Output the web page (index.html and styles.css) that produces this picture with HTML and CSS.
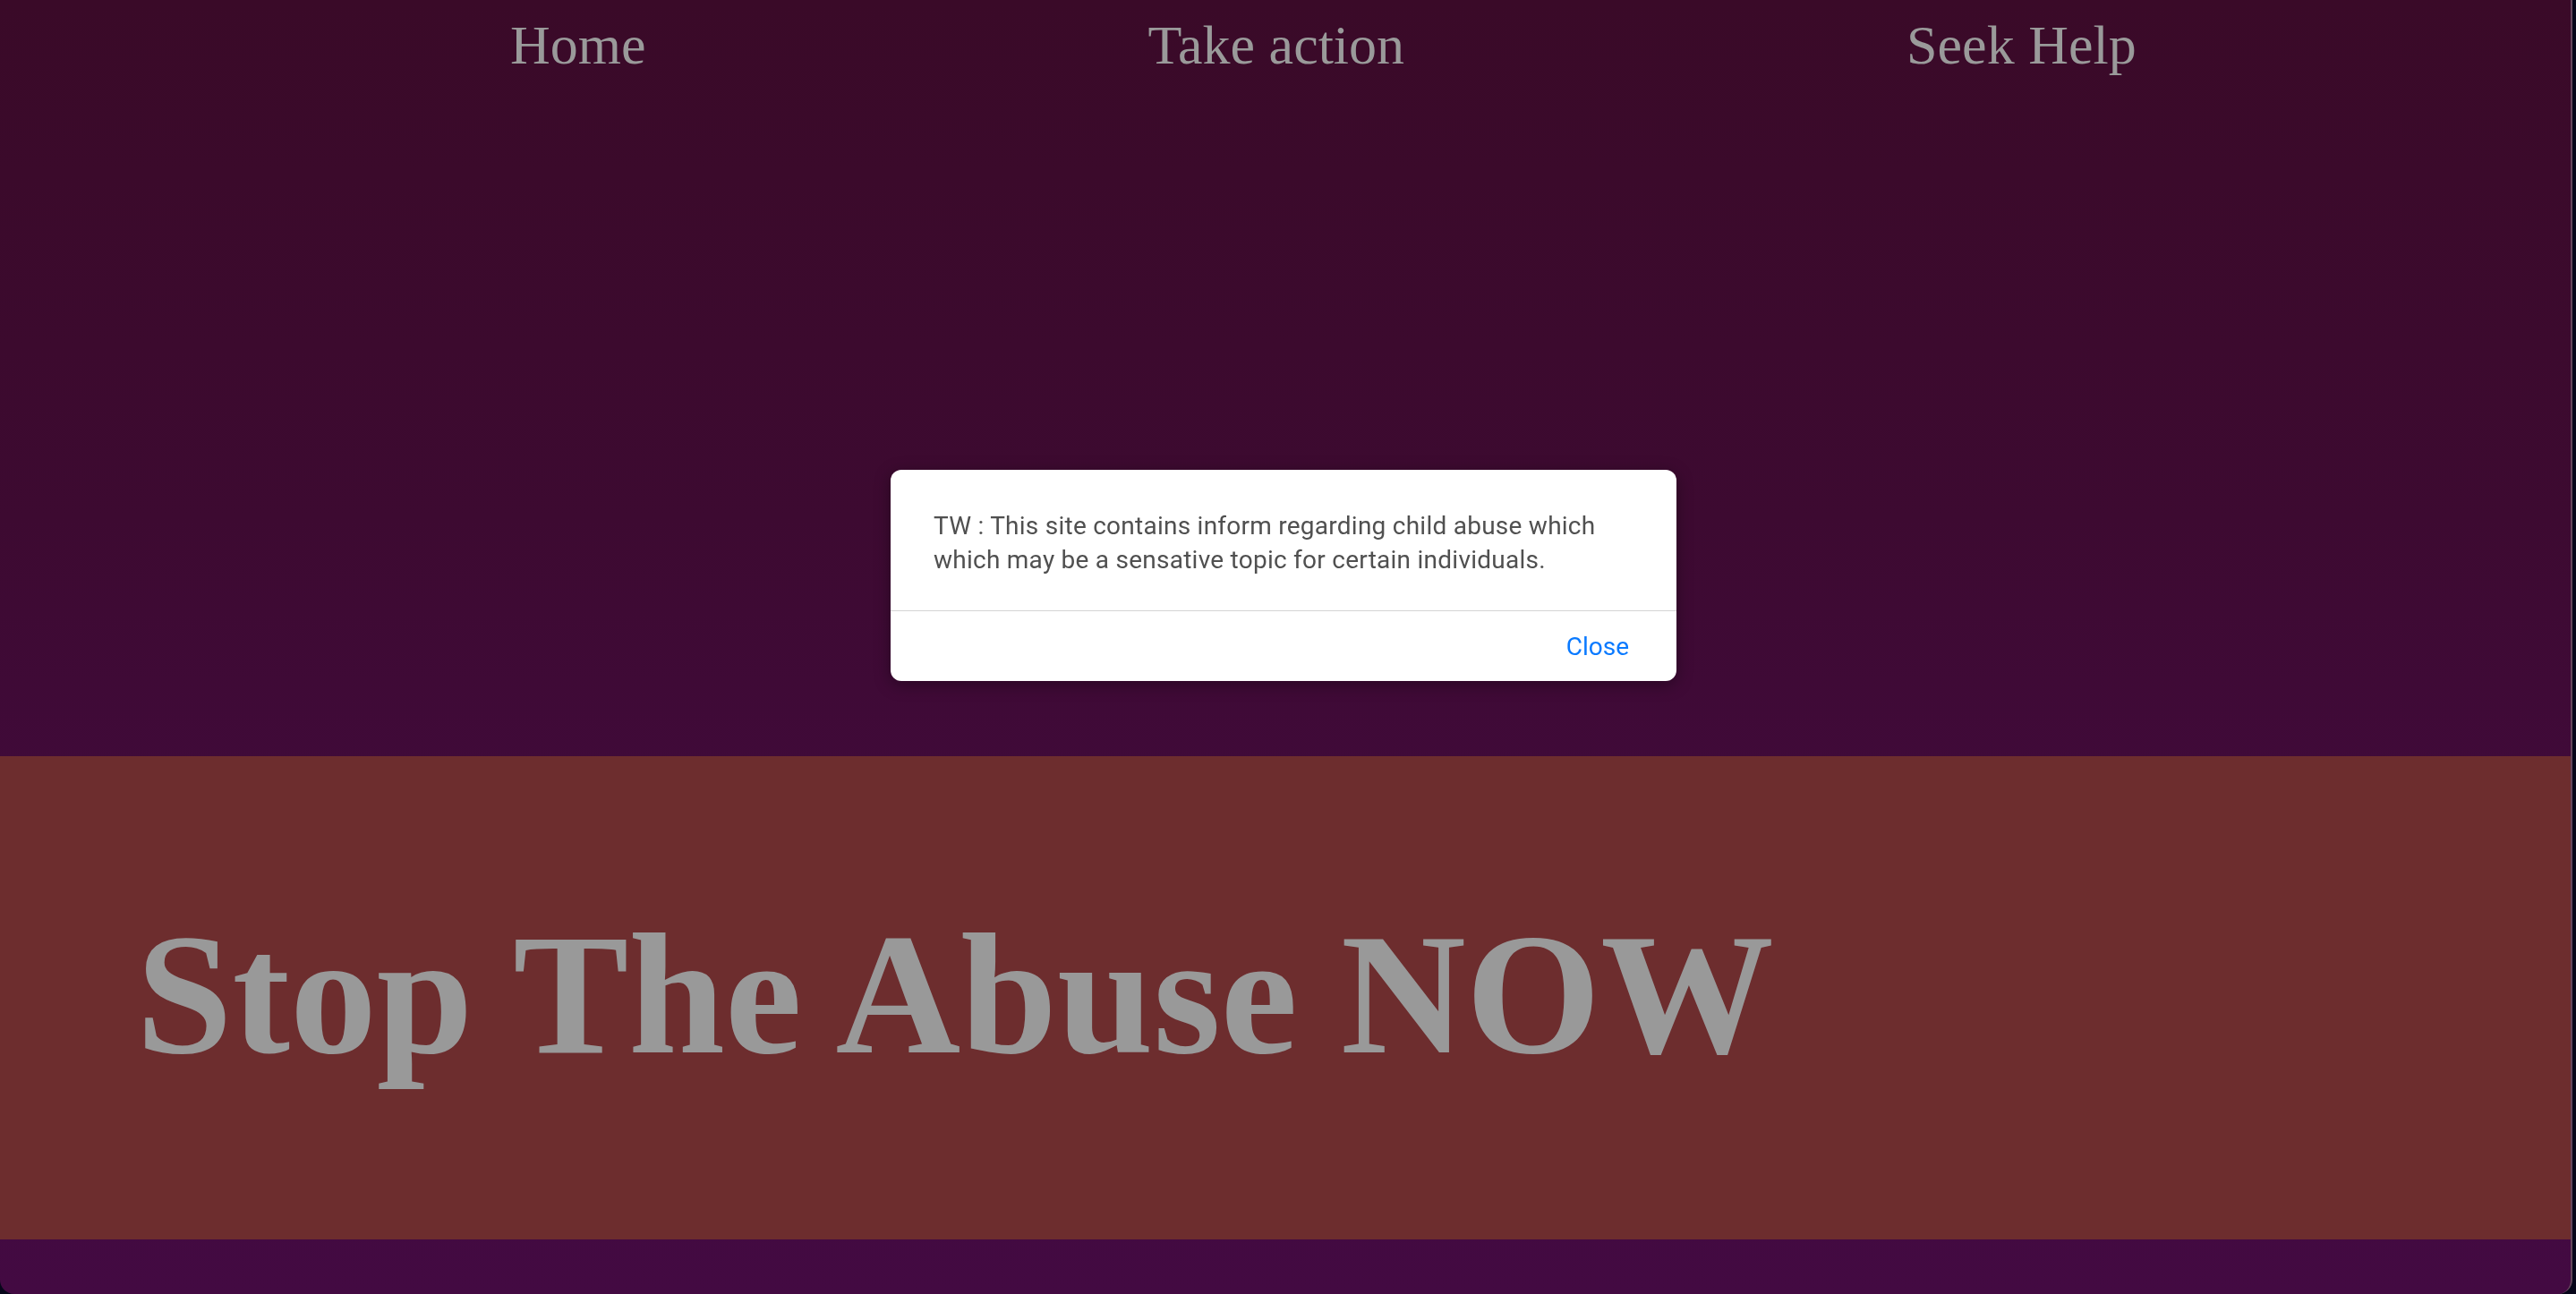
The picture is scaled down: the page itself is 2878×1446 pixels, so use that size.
FILE: index.html
```html
<!DOCTYPE html>
<html lang="en">
<head>
<meta charset="utf-8">
<title>Stop The Abuse NOW</title>
<link rel="stylesheet" href="styles.css">
</head>
<body>
<div class="window">
  <section class="top">
    <nav class="nav">
      <a class="nav-link" href="#">Home</a>
      <a class="nav-link" href="#">Take action</a>
      <a class="nav-link" href="#">Seek Help</a>
    </nav>
  </section>
  <section class="hero">
    <h1 class="hero-title">Stop The Abuse NOW</h1>
  </section>
  <div class="bottom"></div>
</div>

<div class="dialog" role="alertdialog">
  <div class="dialog-body">
    <p class="dialog-text">TW : This site contains inform regarding child abuse which which may be a sensative topic for certain individuals.</p>
  </div>
  <div class="dialog-footer">
    <button class="dialog-btn" type="button">Close</button>
  </div>
</div>
</body>
</html>
```
FILE: styles.css
```css
html {
  margin: 0;
  padding: 0;
  background: #07061a;
}
body {
  margin: 0;
  padding: 0;
  width: 2878px;
  height: 1446px;
  overflow: hidden;
  background: #07061a;
}
.window {
  box-sizing: border-box;
  width: 2874px;
  height: 1446px;
  border-right: 2px solid #64465c;
  border-radius: 0 0 16px 16px;
  overflow: hidden;
  display: flex;
  flex-direction: column;
  background: linear-gradient(to bottom, #3a0a28 0%, #3d0a31 40%, #400a39 60%, #430a42 100%);
  font-family: "Liberation Serif", "Times New Roman", serif;
}
.top {
  height: 845px;
  flex: none;
}
.nav {
  display: flex;
  align-items: flex-start;
  padding: 15px 0 0 570px;
  gap: 561px;
}
.nav-link {
  font-family: "Liberation Serif", "Times New Roman", serif;
  font-size: 62px;
  color: #9a9a9a;
  text-decoration: none;
  white-space: nowrap;
}
.hero {
  flex: none;
  box-sizing: border-box;
  height: 540px;
  background: #6d2d2e;
  padding: 155px 0 0 152px;
}
.hero-title {
  margin: 0;
  font-family: "Liberation Serif", "Times New Roman", serif;
  font-weight: bold;
  font-size: 193.5px;
  line-height: normal;
  color: #999999;
  white-space: nowrap;
}
.bottom {
  flex: 1;
}
.dialog {
  position: fixed;
  top: 525px;
  left: 995px;
  width: 878px;
  background: #ffffff;
  border-radius: 12px;
  box-shadow: 0 4px 18px rgba(0, 0, 0, 0.35);
  font-family: Roboto, "Helvetica Neue", Arial, sans-serif;
  overflow: hidden;
}
.dialog-body {
  padding: 44px 48px 37px 48px;
  border-bottom: 1px solid #d4d4d4;
}
.dialog-text {
  margin: 0;
  font-size: 28px;
  line-height: 38px;
  letter-spacing: 0.25px;
  color: #505050;
}
.dialog-footer {
  height: 78px;
  display: flex;
  align-items: center;
  justify-content: flex-end;
  padding-right: 53px;
}
.dialog-btn {
  border: 0;
  background: none;
  padding: 0;
  font-family: Roboto, "Helvetica Neue", Arial, sans-serif;
  font-size: 28px;
  color: #0a7aff;
  cursor: pointer;
}
```
